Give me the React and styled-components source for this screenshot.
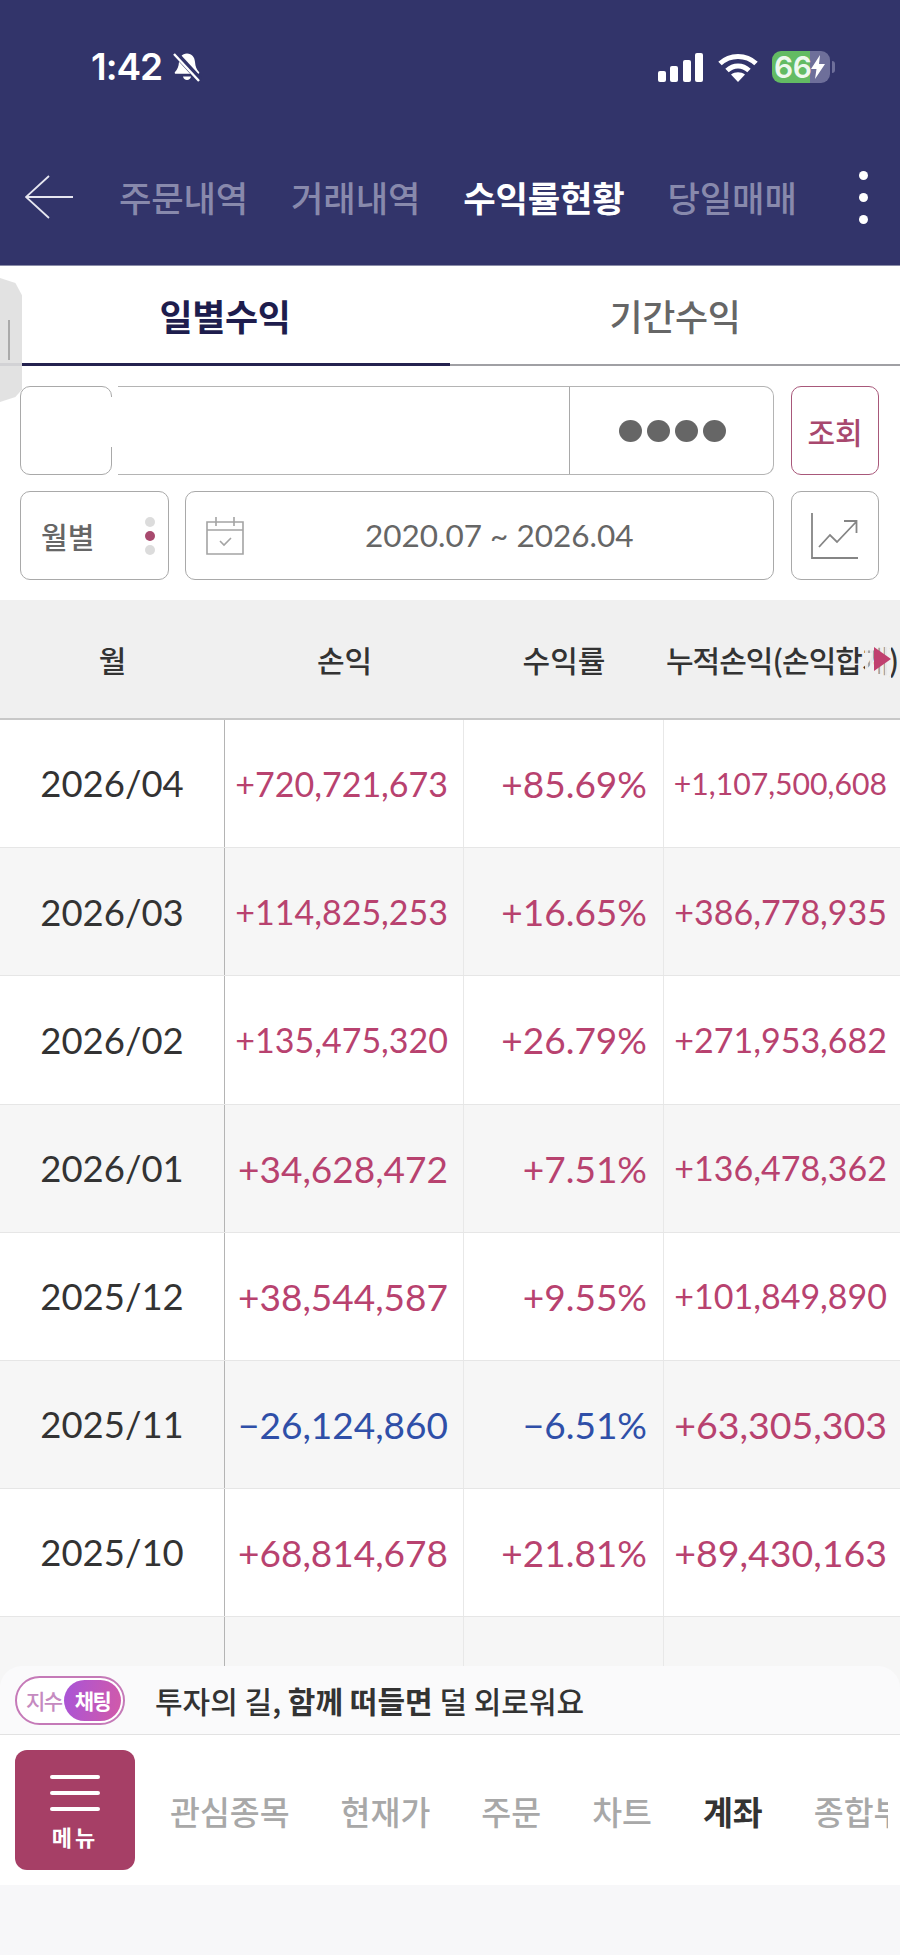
import React from 'react';
import styled, { createGlobalStyle } from 'styled-components';

const KR = '"Noto Sans CJK KR", "Noto Sans", sans-serif';
const NUM = 'Lato, "Noto Sans", sans-serif';

const rows = [
  { month: '2026/04', pl: '+720,721,673', plSize: 34, rate: '+85.69%', total: '+1,107,500,608', totalSize: 30.2, alt: false },
  { month: '2026/03', pl: '+114,825,253', plSize: 34, rate: '+16.65%', total: '+386,778,935', totalSize: 34, alt: true },
  { month: '2026/02', pl: '+135,475,320', plSize: 34, rate: '+26.79%', total: '+271,953,682', totalSize: 34, alt: false },
  { month: '2026/01', pl: '+34,628,472', plSize: 37, rate: '+7.51%', total: '+136,478,362', totalSize: 34, alt: true },
  { month: '2025/12', pl: '+38,544,587', plSize: 37, rate: '+9.55%', total: '+101,849,890', totalSize: 34, alt: false },
  { month: '2025/11', pl: '−26,124,860', plSize: 37, rate: '−6.51%', total: '+63,305,303', totalSize: 37.5, alt: true, minus: true },
  { month: '2025/10', pl: '+68,814,678', plSize: 37, rate: '+21.81%', total: '+89,430,163', totalSize: 37.5, alt: false },
];

export default function App() {
  return (
    <Page>
      <GlobalStyle />
      <Header>
        <StatusBar>
          <Clock>
            <span>1:42</span>
            <svg width="30" height="30" viewBox="0 0 30 30">
              <path d="M15 1.5c-5 0-7.6 3.6-8 8.500-.4 4.800-1.500 7.500-4 10-.6.800-.2 1.800 1 1.800h22c1.200 0 1.600-1 1-1.800-2.500-2.500-3.600-5.200-4-10-.4-4.900-3-8.500-8-8.500z" fill="#fff" />
              <path d="M11 24.500h8c-.3 2.300-2 3.500-4 3.500s-3.700-1.200-4-3.500z" fill="#fff" />
              <path d="M3 1l25 27" stroke="#32346a" strokeWidth="6" />
              <path d="M2 2l25 27" stroke="#fff" strokeWidth="2.400" />
            </svg>
          </Clock>
          <StatusIcons>
            <svg width="46" height="29" viewBox="0 0 46 29" fill="#fff">
              <rect x="0" y="18" width="8" height="11" rx="2" />
              <rect x="12" y="13" width="8" height="16" rx="2" />
              <rect x="25" y="7" width="8" height="22" rx="2" />
              <rect x="37" y="0" width="8" height="29" rx="2" />
            </svg>
            <svg width="40" height="29" viewBox="0 0 40 29" fill="none" stroke="#fff" strokeWidth="5">
              <path d="M2 10.500C12 1 28 1 38 10.500" />
              <path d="M9 17.500c6.500-6 15.500-6 22 0" />
              <path d="M20 29l-7-7.500c4-3 10-3 14 0z" fill="#fff" stroke="none" />
            </svg>
            <Battery>
              <BatteryLevel>66</BatteryLevel>
              <svg width="14" height="24" viewBox="0 0 14 24" fill="#fff">
                <path d="M9 0L0 14h5.500L4 24l10-15H8z" />
              </svg>
            </Battery>
          </StatusIcons>
        </StatusBar>
        <TopNav>
          <svg width="48" height="44" viewBox="0 0 48 44" fill="none" stroke="#e6e6f0" strokeWidth="1.800">
            <path d="M24 1L1 22l23 21M1 22h47" />
          </svg>
          <TopNavItems>
            <TopNavItem>주문내역</TopNavItem>
            <TopNavItem>거래내역</TopNavItem>
            <TopNavItem $active>수익률현황</TopNavItem>
            <TopNavItem>당일매매</TopNavItem>
          </TopNavItems>
          <MoreDots>
            <i /><i /><i />
          </MoreDots>
        </TopNav>
      </Header>

      <Tabs>
        <Tab $active>일별수익</Tab>
        <Tab>기간수익</Tab>
        <SideHandle />
      </Tabs>

      <Filters>
        <FilterRow>
          <AccountGroup>
            <AccountStub />
            <AccountField>
              <AccountName />
              <PinField>
                <i /><i /><i /><i />
              </PinField>
            </AccountField>
          </AccountGroup>
          <SideButton $accent>조회</SideButton>
        </FilterRow>
        <FilterRow>
          <PeriodSelect>
            <span>월별</span>
            <PeriodDots>
              <PeriodDot />
              <PeriodDot $on />
              <PeriodDot />
            </PeriodDots>
          </PeriodSelect>
          <DateRange>
            <svg width="40" height="40" viewBox="0 0 40 40" fill="none" stroke="#a4a4a4" strokeWidth="1.600">
              <path d="M2 6h36v32H2zM2 14h36M11 1v9M29 1v9" />
              <path d="M15 25l4 4 7-7" />
            </svg>
            <DateText>2020.07 ~ 2026.04</DateText>
          </DateRange>
          <SideButton>
            <svg width="48" height="46" viewBox="0 0 48 46" fill="none" stroke="#858585" strokeWidth="1.800">
              <path d="M1 0v45h46" />
              <path d="M8 34l11-12 7 7 19-20M33 8h12.500v12" />
            </svg>
          </SideButton>
        </FilterRow>
      </Filters>

      <TableWrap>
        <HeadRow>
          <HeadCell>월</HeadCell>
          <HeadCell>손익</HeadCell>
          <HeadCell>수익률</HeadCell>
          <HeadCell $clip>
            누적손익(손익합계)
            <ScrollHint>
              <svg width="17" height="24" viewBox="0 0 17 24"><path d="M0 0l17 12L0 24z" fill="#c0406f" /></svg>
            </ScrollHint>
          </HeadCell>
        </HeadRow>
        {rows.map((r) => (
          <Row key={r.month} $alt={r.alt}>
            <MonthCell>{r.month}</MonthCell>
            <ValueCell $size={r.plSize} $minus={r.minus} $pad={15}>{r.pl}</ValueCell>
            <ValueCell $size={37} $minus={r.minus} $pad={16}>{r.rate}</ValueCell>
            <ValueCell $size={r.totalSize} $pad={13}>{r.total}</ValueCell>
          </Row>
        ))}
        <Row $alt>
          <MonthCell />
          <ValueCell $size={34} $pad={15} />
          <ValueCell $size={34} $pad={15} />
          <ValueCell $size={34} $pad={15} />
        </Row>
      </TableWrap>

      <Dock>
        <ChatBar>
          <ChatToggle>
            <ChatLabel>지수</ChatLabel>
            <ChatKnob>채팅</ChatKnob>
          </ChatToggle>
          <ChatText>투자의 길, <b>함께 떠들면</b> 덜 외로워요</ChatText>
        </ChatBar>
        <BottomNav>
          <MenuButton>
            <i /><i /><i />
            <span>메뉴</span>
          </MenuButton>
          <BottomItems>
            <BottomItem>관심종목</BottomItem>
            <BottomItem>현재가</BottomItem>
            <BottomItem>주문</BottomItem>
            <BottomItem>차트</BottomItem>
            <BottomItem $active>계좌</BottomItem>
            <BottomItem>종합부</BottomItem>
          </BottomItems>
        </BottomNav>
      </Dock>
    </Page>
  );
}

const GlobalStyle = createGlobalStyle`
  html, body { margin: 0; padding: 0; background: #f7f7f9; }
  body { font-family: ${KR}; overflow: hidden; }
  * { box-sizing: border-box; }
`;

const Page = styled.div`
  width: 900px;
  height: 1955px;
  overflow: hidden;
  display: flex;
  flex-direction: column;
`;

const Header = styled.header`
  height: 266px;
  background: #32346a;
  padding: 50px 0 0;
  border-bottom: 1px solid #8a8ca8;
`;

const StatusBar = styled.div`
  height: 34px;
  padding: 0 70px 0 91px;
  display: flex;
  align-items: center;
  justify-content: space-between;
`;

const Clock = styled.div`
  display: flex;
  align-items: center;
  gap: 10px;
  color: #fff;
  font: 600 37px/34px Inter, sans-serif;
  letter-spacing: -1px;
`;

const StatusIcons = styled.div`
  display: flex;
  align-items: center;
  gap: 14px;
`;

const Battery = styled.div`
  position: relative;
  width: 58px;
  height: 32px;
  border-radius: 9px;
  display: flex;
  align-items: center;
  padding-left: 2px;
  color: #fff;
  background: linear-gradient(to right, #63bb63 66%, #6e6f9a 66%);
  &::after {
    content: '';
    position: absolute;
    right: -5px;
    top: 10px;
    width: 3px;
    height: 12px;
    border-radius: 0 3px 3px 0;
    background: #6e6f9a;
  }
`;

const BatteryLevel = styled.span`
  font: 600 30px/32px Inter, sans-serif;
  color: #eef8ee;
  letter-spacing: -0.5px;
`;

const TopNav = styled.nav`
  margin-top: 83px;
  padding-left: 25px;
  display: flex;
  align-items: center;
  height: 60px;
`;

const TopNavItems = styled.div`
  margin-left: 46px;
  display: flex;
  gap: 43px;
`;

const TopNavItem = styled.span`
  font-size: 35.300px;
  line-height: 50px;
  white-space: nowrap;
  letter-spacing: -0.2px;
  font-weight: ${(p) => (p.$active ? 700 : 500)};
  color: ${(p) => (p.$active ? '#fff' : '#8889ac')};
`;

const MoreDots = styled.div`
  margin-left: 62px;
  display: flex;
  flex-direction: column;
  gap: 13px;
  i {
    display: block;
    width: 9px;
    height: 9px;
    border-radius: 50%;
    background: #fff;
  }
`;

const Tabs = styled.div`
  position: relative;
  display: flex;
  height: 100px;
  background: #fff;
`;

const Tab = styled.div`
  width: 450px;
  display: flex;
  align-items: center;
  justify-content: center;
  font-size: 36px;
  letter-spacing: -0.4px;
  font-weight: ${(p) => (p.$active ? 700 : 500)};
  color: ${(p) => (p.$active ? '#1e1d4d' : '#666')};
  border-bottom: ${(p) => (p.$active ? '3px solid #24224f' : '2px solid #a0a0a4')};
`;

const SideHandle = styled.div`
  position: absolute;
  left: 0;
  top: 12px;
  width: 22px;
  height: 124px;
  background: rgba(224, 224, 224, 0.93);
  border-radius: 0 6px 6px 0;
  clip-path: polygon(0 0, 70% 4%, 100% 14%, 100% 90%, 70% 96%, 0 100%);
  z-index: 2;
  &::after {
    content: '';
    position: absolute;
    left: 8px;
    top: 42px;
    width: 2px;
    height: 40px;
    background: #aaa;
  }
`;

const Filters = styled.div`
  background: #fff;
  padding: 20px 21px 20px 20px;
  display: flex;
  flex-direction: column;
  gap: 16px;
`;

const FilterRow = styled.div`
  display: flex;
  height: 89px;
  gap: 17px;
`;

const AccountGroup = styled.div`
  flex: 1;
  display: flex;
  gap: 6px;
`;

const AccountStub = styled.div`
  position: relative;
  width: 92px;
  border: 1.5px solid #a9a9a9;
  border-radius: 10px;
  &::after {
    content: '';
    position: absolute;
    right: -3px;
    top: 10px;
    height: 50px;
    width: 8px;
    background: #fff;
  }
`;

const AccountField = styled.div`
  flex: 1;
  display: flex;
  border: 1.5px solid #b4b4b4;
  border-left: none;
  border-radius: 0 10px 10px 0;
`;

const AccountName = styled.div`
  flex: 1;
  border-right: 1.5px solid #a9a9a9;
`;

const PinField = styled.div`
  width: 203px;
  padding-left: 2px;
  display: flex;
  align-items: center;
  justify-content: center;
  gap: 5px;
  i {
    display: block;
    width: 23px;
    height: 22px;
    border-radius: 50%;
    background: #666;
  }
`;

const SideButton = styled.button`
  width: 88px;
  padding: 0;
  background: #fff;
  display: flex;
  align-items: center;
  justify-content: center;
  border-radius: 10px;
  font-family: ${KR};
  font-size: 30px;
  font-weight: 500;
  color: #a8486e;
  border: 1.5px solid ${(p) => (p.$accent ? '#a8587a' : '#a9a9a9')};
`;

const PeriodSelect = styled.div`
  position: relative;
  width: 149px;
  margin-right: -1px;
  padding-left: 20px;
  display: flex;
  align-items: center;
  justify-content: space-between;
  padding-right: 13px;
  border: 1.5px solid #a9a9a9;
  border-radius: 10px;
  font-size: 29px;
  font-weight: 500;
  color: #666;
`;

const PeriodDots = styled.div`
  display: flex;
  flex-direction: column;
  gap: 4px;
`;

const PeriodDot = styled.i`
  display: block;
  width: 10px;
  height: 10px;
  border-radius: 50%;
  background: ${(p) => (p.$on ? '#a84a6e' : '#dcdcdc')};
`;

const DateRange = styled.div`
  flex: 1;
  display: flex;
  align-items: center;
  padding-left: 19px;
  border: 1.5px solid #a9a9a9;
  border-radius: 10px;
`;

const DateText = styled.span`
  margin-left: 120px;
  font: 400 31.500px/1 ${NUM};
  color: #666;
  white-space: nowrap;
`;

const TableWrap = styled.div`
  flex: none;
  height: 1088px;
  overflow: hidden;
  background: #fff;
`;

const columns = '225px 239px 200px 236px';

const HeadRow = styled.div`
  height: 120px;
  display: grid;
  grid-template-columns: ${columns};
  background: #f0f0f0;
  border-bottom: 2px solid #c8c8c8;
`;

const HeadCell = styled.div`
  position: relative;
  display: flex;
  align-items: center;
  justify-content: ${(p) => (p.$clip ? 'flex-start' : 'center')};
  padding-left: ${(p) => (p.$clip ? '2px' : 0)};
  font-size: 30px;
  font-weight: 500;
  color: #333;
  white-space: nowrap;
  letter-spacing: ${(p) => (p.$clip ? '-1px' : 0)};
  overflow: hidden;
`;

const ScrollHint = styled.span`
  position: absolute;
  right: 9px;
  top: 40px;
  width: 26px;
  height: 38px;
  display: flex;
  align-items: center;
  justify-content: flex-end;
  background: repeating-linear-gradient(to right, rgba(240, 240, 240, 0.95) 0 3px, rgba(240, 240, 240, 0.6) 3px 5px);
`;

const Row = styled.div`
  height: 128.200px;
  display: grid;
  grid-template-columns: ${columns};
  background: ${(p) => (p.$alt ? '#f6f6f6' : '#fff')};
  border-bottom: 1px solid #e6e6e6;
`;

const MonthCell = styled.div`
  display: flex;
  align-items: center;
  justify-content: center;
  font: 400 36.500px/1 ${NUM};
  color: #333;
  border-right: 1px solid #b4b4b4;
`;

const ValueCell = styled.div`
  display: flex;
  align-items: center;
  justify-content: flex-end;
  padding-right: ${(p) => p.$pad}px;
  font: 400 ${(p) => p.$size}px/1 ${NUM};
  color: ${(p) => (p.$minus ? '#2f4fa8' : '#b8426f')};
  border-right: 1px solid #e8e8e8;
  white-space: nowrap;
  &:last-child { border-right: none; }
`;

const Dock = styled.div`
  margin-top: -22px;
  position: relative;
`;

const ChatBar = styled.div`
  height: 69px;
  display: flex;
  align-items: center;
  padding-left: 15px;
  gap: 30px;
  background: #fafafb;
  border-radius: 22px 22px 0 0;
  border-bottom: 1px solid #e2e2e2;
`;

const ChatToggle = styled.div`
  width: 110px;
  height: 49px;
  border: 2.500px solid #c57ab8;
  border-radius: 25px;
  background: #fff;
  display: flex;
  align-items: center;
  justify-content: space-between;
  padding: 2px;
`;

const ChatLabel = styled.span`
  padding-left: 7px;
  font-size: 21px;
  font-weight: 500;
  letter-spacing: -1.500px;
  color: #c58ac0;
`;

const ChatKnob = styled.span`
  width: 57px;
  height: 41px;
  border-radius: 21px;
  background: linear-gradient(100deg, #a854d8, #d25aa8);
  display: flex;
  align-items: center;
  justify-content: center;
  font-size: 21px;
  font-weight: 700;
  letter-spacing: -1.500px;
  color: #fff;
`;

const ChatText = styled.span`
  font-size: 30px;
  font-weight: 500;
  color: #333;
  white-space: nowrap;
  b { font-weight: 700; }
`;

const BottomNav = styled.nav`
  height: 150px;
  background: #fff;
  padding-left: 15px;
  display: flex;
  align-items: center;
  overflow: hidden;
`;

const MenuButton = styled.div`
  flex: none;
  width: 120px;
  height: 120px;
  border-radius: 12px;
  background: #a63f66;
  display: flex;
  flex-direction: column;
  align-items: center;
  padding-top: 25px;
  i {
    display: block;
    width: 50px;
    height: 4px;
    border-radius: 2px;
    background: #fff;
    margin-bottom: 12px;
  }
  span {
    font-size: 22px;
    line-height: 26px;
    font-weight: 700;
    letter-spacing: 3px;
    color: #fff;
  }
`;

const BottomItems = styled.div`
  margin-left: 35px;
  display: flex;
  gap: 51px;
  width: 718px;
  overflow: hidden;
`;

const BottomItem = styled.span`
  font-size: 32.500px;
  white-space: nowrap;
  font-weight: ${(p) => (p.$active ? 700 : 500)};
  color: ${(p) => (p.$active ? '#333' : '#a8a8a8')};
`;
